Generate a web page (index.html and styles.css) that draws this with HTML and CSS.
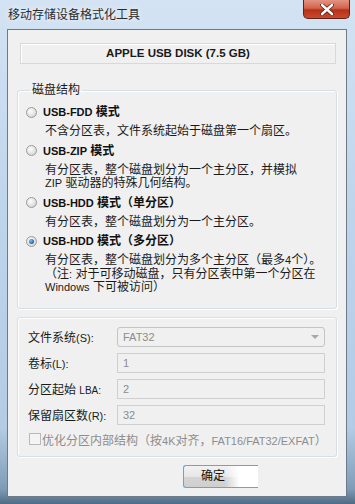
FILE: index.html
```html
<!DOCTYPE html>
<html lang="zh-CN">
<head>
    <meta charset="UTF-8">
    <meta name="viewport" content="width=device-width, initial-scale=1.0">
    <title>移动存储设备格式化工具</title>
    <link rel="stylesheet" href="styles.css">
</head>
<body>

<div class="window">
    <div class="titlebar">
        <span class="title">移动存储设备格式化工具</span>
        <div class="close">
            <svg width="14" height="11" viewBox="0 0 14 11">
                <path d="M2 1 L12 10 M12 1 L2 10" stroke="#5a1a10" stroke-width="4" stroke-linecap="round"/>
                <path d="M2 1 L12 10 M12 1 L2 10" stroke="#fff" stroke-width="2.4" stroke-linecap="round"/>
            </svg>
        </div>
    </div>

    <div class="client">
        <div class="disk">APPLE USB DISK (7.5 GB)</div>

        <fieldset class="group">
            <legend>磁盘结构</legend>

            <div class="option">
                <span class="radio"></span>
                <span class="opt-title"><b>USB-FDD</b> 模式</span>
            </div>
            <div class="desc">不含分区表，文件系统起始于磁盘第一个扇区。</div>

            <div class="option">
                <span class="radio"></span>
                <span class="opt-title"><b>USB-ZIP</b> 模式</span>
            </div>
            <div class="desc">有分区表，整个磁盘划分为一个主分区，并模拟<br><span class="en">ZIP</span> 驱动器的特殊几何结构。</div>

            <div class="option">
                <span class="radio"></span>
                <span class="opt-title"><b>USB-HDD</b> 模式（单分区）</span>
            </div>
            <div class="desc">有分区表，整个磁盘划分为一个主分区。</div>

            <div class="option">
                <span class="radio checked"></span>
                <span class="opt-title"><b>USB-HDD</b> 模式（多分区）</span>
            </div>
            <div class="desc">有分区表，整个磁盘划分为多个主分区（最多<span class="en">4</span>个）。<br>（注<span class="en">:</span> 对于可移动磁盘，只有分区表中第一个分区在<br><span class="en">Windows</span> 下可被访问）</div>
        </fieldset>

        <div class="group settings">
            <div class="row">
                <span class="label">文件系统<span class="en">(S):</span></span>
                <span class="field combo">FAT32<span class="arrow"></span></span>
            </div>
            <div class="row">
                <span class="label">卷标<span class="en">(L):</span></span>
                <span class="field">1</span>
            </div>
            <div class="row">
                <span class="label">分区起始 <small>LBA:</small></span>
                <span class="field">2</span>
            </div>
            <div class="row">
                <span class="label">保留扇区数<span class="en">(R):</span></span>
                <span class="field">32</span>
            </div>
            <div class="check-row">
                <span class="checkbox"></span>
                <span>优化分区内部结构（按<span class="en">4K</span>对齐，<span class="en">FAT16/FAT32/EXFAT</span>）</span>
            </div>
        </div>

        <div class="actions">
            <span class="button">确定</span>
        </div>
    </div>
</div>

</body>
</html>
```

FILE: styles.css
```css
body {
    margin: 0;
    font-family: "Liberation Sans", "Noto Sans CJK SC", sans-serif;
    font-size: 12px;
    color: #111;
    background-color: #bcd3eb;
}
.en {
    font-size: 11px;
}
.window {
    width: 355px;
    height: 504px;
    box-sizing: border-box;
    padding: 0 8px 10px 7px;
    background: linear-gradient(180deg, #d3e3f3 0%, #bfd5ec 40%, #b3cbe5 85%, #7f9cb6 97%, #4f6b84 100%);
    display: flex;
    flex-direction: column;
}
.titlebar {
    height: 29px;
    flex: none;
    display: flex;
    align-items: flex-start;
}
.title {
    margin-top: 7px;
    margin-left: 1px;
    font-size: 12px;
    line-height: 16px;
    color: #2b2b2b;
    text-shadow: 0 0 6px #fff;
}
.close {
    display: flex;
    align-items: center;
    justify-content: center;
    margin-left: auto;
    margin-right: -3px;
    width: 47px;
    height: 19px;
    flex: none;
    box-sizing: border-box;
    border: 1px solid #5e2018;
    border-top: none;
    border-radius: 0 0 5px 5px;
    background: linear-gradient(180deg, #e49282 0%, #d2654c 45%, #b8301a 55%, #c84a2e 100%);
}
.client {
    flex: 1;
    border: 1px solid #6d7a88;
    background-color: #f0f0f0;
    padding: 13px 9px 8px 9px;
    display: flex;
    flex-direction: column;
}
.disk {
    height: 21px;
    box-sizing: border-box;
    margin: 0 1px 0 3px;
    border: 1px solid #d8d8d8;
    box-shadow: inset 1px 1px 0 #fff;
    font-weight: bold;
    font-size: 11.5px;
    line-height: 19px;
    text-align: center;
    color: #1a1a1a;
}

/* Grupe */
.group {
    margin: 18px 0 0 0;
    border: 1px solid #d5dfe5;
    border-radius: 3px;
    box-shadow: inset 1px 1px 0 #fff, 1px 1px 0 #fff;
    padding: 5px 8px 13px 8px;
    min-width: 0;
}
.group legend {
    padding: 0 2px;
    margin-left: 4px;
    line-height: 16px;
    color: #1a1a1a;
}
.option {
    display: flex;
    align-items: center;
    height: 18px;
    margin-top: 3px;
}
.option:first-of-type {
    margin-top: 0;
}
.radio {
    width: 11px;
    height: 11px;
    box-sizing: border-box;
    border-radius: 50%;
    border: 1px solid #9a9a9a;
    background: radial-gradient(circle at 40% 35%, #fdfdfd 0%, #e2e2e2 55%, #c9c9c9 100%);
    margin-right: 6px;
    display: flex;
    align-items: center;
    justify-content: center;
}
.radio.checked::after {
    content: "";
    width: 5px;
    height: 5px;
    border-radius: 50%;
    background: radial-gradient(circle at 35% 35%, #7fc0f0 0%, #2a6fb8 60%, #173f7a 100%);
}
.opt-title {
    font-weight: bold;
    font-size: 12px;
    line-height: 18px;
}
.opt-title b {
    font-size: 11px;
}
.desc {
    margin-top: 4px;
    padding-left: 19px;
    line-height: 13.5px;
    color: #1a1a1a;
}

.settings {
    margin-top: 8px;
    padding: 9px 11px 8px 10px;
}
.row {
    display: flex;
    align-items: center;
    height: 20px;
    margin-bottom: 6px;
}
.label {
    width: 89px;
    color: #1a1a1a;
}
.label small {
    font-size: 10px;
}
.field {
    flex: 1;
    height: 20px;
    box-sizing: border-box;
    border: 1px solid #cfcfcf;
    padding: 0 5px;
    line-height: 18px;
    color: #8c8c8c;
    font-size: 11px;
}
.combo {
    border-color: #c4c4c4;
    border-radius: 3px;
    display: flex;
    align-items: center;
    justify-content: space-between;
}
.arrow {
    width: 0;
    height: 0;
    border-left: 4px solid transparent;
    border-right: 4px solid transparent;
    border-top: 4px solid #a8a8a8;
}
.check-row {
    display: flex;
    align-items: center;
    margin-top: 5px;
    color: #8d8d8d;
    white-space: nowrap;
}
.checkbox {
    width: 12px;
    height: 12px;
    flex: none;
    box-sizing: border-box;
    border: 1px solid #b9b9b9;
    background-color: #f4f4f4;
    margin: 0 1px 0 1px;
}

.actions {
    margin-top: 8px;
    padding-left: 166px;
}
.button {
    display: inline-block;
    width: 75px;
    height: 23px;
    box-sizing: border-box;
    border: 1px solid #5fa8d6;
    border-right: none;
    border-radius: 3px 0 0 3px;
    background: linear-gradient(90deg, rgba(255,255,255,0) 55%, #fff 75%),
                linear-gradient(180deg, #f2f2f2 0%, #e6e6e6 50%, #d4d4d4 51%, #cfcfcf 100%);
    padding-left: 17px;
    line-height: 21px;
    color: #111;
}
```
